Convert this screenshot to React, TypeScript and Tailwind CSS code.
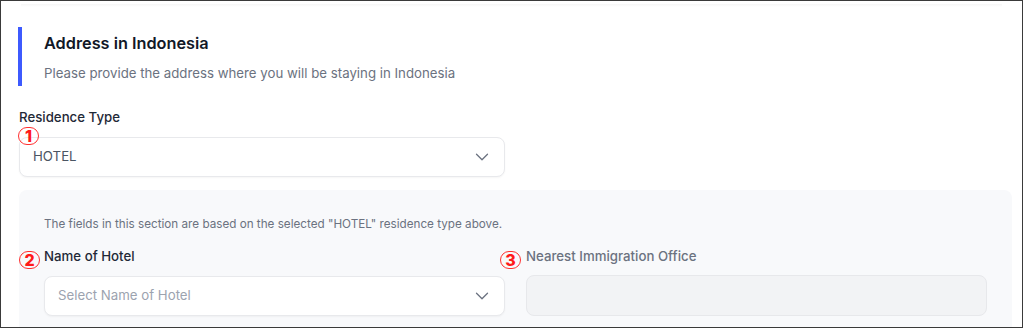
import { ChevronDown } from "lucide-react";

function Marker({ n, className }: { n: string; className: string }) {
    return (
        <span
            className={`absolute flex h-[18px] w-[21px] items-center justify-center rounded-full border border-[#ff3030] text-[16px] font-extrabold leading-none text-[#ff1a1a] ${className}`}
        >
            {n}
        </span>
    );
}

export default function App() {
    return (
        <div className="h-[329px] w-[1024px] overflow-hidden bg-white font-['Inter',sans-serif]">
            <div className="relative h-[328px] w-[1023px] overflow-hidden border border-[#3a3a3a]">
                <div className="mx-[20px] mt-[3px] h-[3px] bg-gradient-to-b from-[#f6f6f6] to-white" />

                <div className="ml-[17px] mt-[20px] border-l-4 border-[#3d5afe] pb-[3px] pl-[22px] pt-[4px]">
                    <h2 className="text-[16.3px] font-semibold leading-6 text-[#111827]">Address in Indonesia</h2>
                    <p className="mt-2 text-[13.25px] leading-5 text-[#6b7280]">
                        Please provide the address where you will be staying in Indonesia
                    </p>
                </div>

                <div className="ml-[18px] mt-[21px]">
                    <label className="block text-[13.25px] font-medium leading-5 text-[#1f2937]">Residence Type</label>
                    <div className="mt-[10px] flex h-[40px] w-[486px] items-center justify-between rounded-lg border border-[#e8e9ec] bg-white pl-[13px] pr-[11px] shadow-[0_1px_2px_rgba(0,0,0,0.04)]">
                        <span className="text-[13.25px] text-[#4b5563]">HOTEL</span>
                        <ChevronDown className="h-[22px] w-[22px] text-[#6b7280]" strokeWidth={1.4} />
                    </div>
                </div>

                <div className="ml-[18px] mt-[13px] w-[993px] rounded-lg bg-[#f8f9fb] pb-6 pl-[25px] pr-[25px] pt-[26px]">
                    <p className="text-[11.7px] leading-4 text-[#6b7280]">
                        The fields in this section are based on the selected "HOTEL" residence type above.
                    </p>
                    <div className="mt-[14px] grid grid-cols-2 gap-[21px]">
                        <div>
                            <label className="block text-[13.25px] font-medium leading-5 text-[#1f2937]">Name of Hotel</label>
                            <div className="mt-[10px] flex h-[40px] items-center justify-between rounded-lg border border-[#e8e9ec] bg-white pl-[13px] pr-[11px] shadow-[0_1px_2px_rgba(0,0,0,0.04)]">
                                <span className="text-[13.25px] text-[#9ca3af]">Select Name of Hotel</span>
                                <ChevronDown className="h-[22px] w-[22px] text-[#6b7280]" strokeWidth={1.4} />
                            </div>
                        </div>
                        <div>
                            <label className="block text-[13.25px] font-medium leading-5 text-[#6b7280]">Nearest Immigration Office</label>
                            <div className="mt-[9px] h-[41px] rounded-lg border border-[#e7e8eb] bg-[#f2f3f5]" />
                        </div>
                    </div>
                </div>

                <Marker n="1" className="left-[17px] top-[126px]" />
                <Marker n="2" className="left-[18px] top-[250px]" />
                <Marker n="3" className="left-[499px] top-[250px]" />
            </div>
        </div>
    );
}
